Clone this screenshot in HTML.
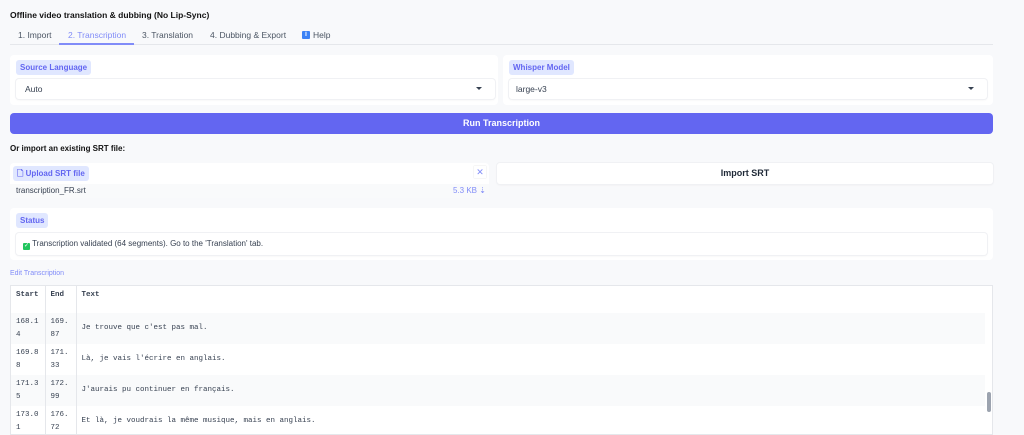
<!DOCTYPE html>
<html><head><style>
*{box-sizing:border-box;margin:0;padding:0}
body{width:1024px;height:431px;overflow:hidden;background:#f8f9fb;font-family:"Liberation Sans",sans-serif;color:#1f2937;position:relative}
.a{position:absolute}
.panel{background:#fff;border-radius:4px}
.lbl{background:#e0e7ff;color:#6366f1;font-weight:bold;font-size:8px;border-radius:3px;padding:3px 4px;line-height:9px}
.box{background:#fff;border-radius:3px;box-shadow:0 0 0 1px #f0f1f4,0 1px 2px rgba(0,0,0,.06)}
.tab{font-size:8.5px;color:#4b5563;top:30px}
td{font-family:"Liberation Mono",monospace;font-size:7.5px;color:#374151;vertical-align:middle;padding:0 5px;border-right:1px solid #e5e7eb;line-height:13px}
tr{height:31px}
.arr{position:absolute;right:13px;top:8px;width:0;height:0;border-left:3px solid transparent;border-right:3px solid transparent;border-top:3px solid #374151}
</style></head><body>
<div class="a" style="left:10px;top:10px;font-size:8.5px;font-weight:bold;color:#111">Offline video translation &amp; dubbing (No Lip-Sync)</div>
<div class="a" style="left:10px;top:44px;width:983px;height:1px;background:#e5e7eb"></div>
<div class="a tab" style="left:18px">1. Import</div>
<div class="a tab" style="left:68px;color:#818cf8">2. Transcription</div>
<div class="a" style="left:59px;top:43px;width:75px;height:2px;background:#818cf8"></div>
<div class="a tab" style="left:142px">3. Translation</div>
<div class="a tab" style="left:210px">4. Dubbing &amp; Export</div>
<div class="a" style="left:302px;top:31px;width:8px;height:8px;background:#3b82f6;border-radius:1px;color:#fff;font-size:7px;line-height:8px;text-align:center;font-weight:bold">i</div>
<div class="a tab" style="left:313px">Help</div>

<div class="a panel" style="left:10px;top:55px;width:488px;height:50px"></div>
<div class="a panel" style="left:503px;top:55px;width:490px;height:50px"></div>
<div class="a lbl" style="left:16px;top:60px">Source Language</div>
<div class="a lbl" style="left:509px;top:60px">Whisper Model</div>
<div class="a box" style="left:16px;top:79px;width:479px;height:20px;font-size:8.5px;padding:5px 9px;color:#374151">Auto<span class="arr"></span></div>
<div class="a box" style="left:509px;top:79px;width:478px;height:20px;font-size:8.5px;padding:5px 7px;color:#374151">large-v3<span class="arr"></span></div>

<div class="a" style="left:10px;top:113px;width:983px;height:21px;background:#6366f1;border-radius:4px;color:#fff;font-weight:bold;font-size:9px;text-align:center;line-height:21px">Run Transcription</div>
<div class="a" style="left:10px;top:144px;font-size:8px;font-weight:bold;color:#111">Or import an existing SRT file:</div>

<div class="a panel" style="left:10px;top:163px;width:479px;height:35px"></div>
<div class="a" style="left:10px;top:184px;width:479px;height:14px;background:#f9fafb"></div>
<div class="a lbl" style="left:13px;top:166px;font-size:8px">🗋 Upload SRT file</div>
<div class="a" style="left:474px;top:166px;width:12px;height:12px;background:#fff;box-shadow:0 0 1px #ccc;color:#818cf8;font-size:9px;text-align:center;line-height:12px">✕</div>
<div class="a" style="left:16px;top:186px;font-size:8px;color:#374151">transcription_FR.srt</div>
<div class="a" style="left:453px;top:186px;font-size:8px;color:#818cf8">5.3 KB ⇣</div>
<div class="a box" style="left:497px;top:163px;width:496px;height:21px;font-weight:bold;font-size:9px;text-align:center;line-height:21px;color:#1f2937">Import SRT</div>

<div class="a panel" style="left:10px;top:208px;width:983px;height:52px"></div>
<div class="a lbl" style="left:16px;top:213px">Status</div>
<div class="a box" style="left:16px;top:233px;width:971px;height:22px;font-size:8px;padding:6px 7px;color:#374151"><span style="display:inline-block;width:7px;height:7px;background:#22c55e;color:#fff;font-size:6px;line-height:7px;text-align:center;vertical-align:-1px;border-radius:1px">✓</span> Transcription validated (64 segments). Go to the 'Translation' tab.</div>

<div class="a" style="left:10px;top:270px;font-size:7px;color:#818cf8">Edit Transcription</div>
<div class="a" style="left:10px;top:285px;width:983px;height:150px;background:#fff;border:1px solid #e5e7eb;overflow:hidden">
<table style="border-collapse:collapse;width:976px">
<tr style="height:27px"><td style="width:34px;font-weight:bold;vertical-align:top;padding-top:3px">Start</td><td style="width:31px;font-weight:bold;vertical-align:top;padding-top:3px">End</td><td style="font-weight:bold;vertical-align:top;padding-top:3px">Text</td></tr>
<tr style="background:#f9fafb"><td>168.1<br>4</td><td>169.<br>87</td><td>Je trouve que c'est pas mal.</td></tr>
<tr><td>169.8<br>8</td><td>171.<br>33</td><td>Là, je vais l'écrire en anglais.</td></tr>
<tr style="background:#f9fafb"><td>171.3<br>5</td><td>172.<br>99</td><td>J'aurais pu continuer en français.</td></tr>
<tr><td>173.0<br>1</td><td>176.<br>72</td><td>Et là, je voudrais la même musique, mais en anglais.</td></tr>
</table>
<div class="a" style="right:0;top:0;width:7px;height:150px;background:#fff"></div>
<div class="a" style="right:1px;top:106px;width:4px;height:20px;background:#9ca3af;border-radius:2px"></div>
</div>
</body></html>
